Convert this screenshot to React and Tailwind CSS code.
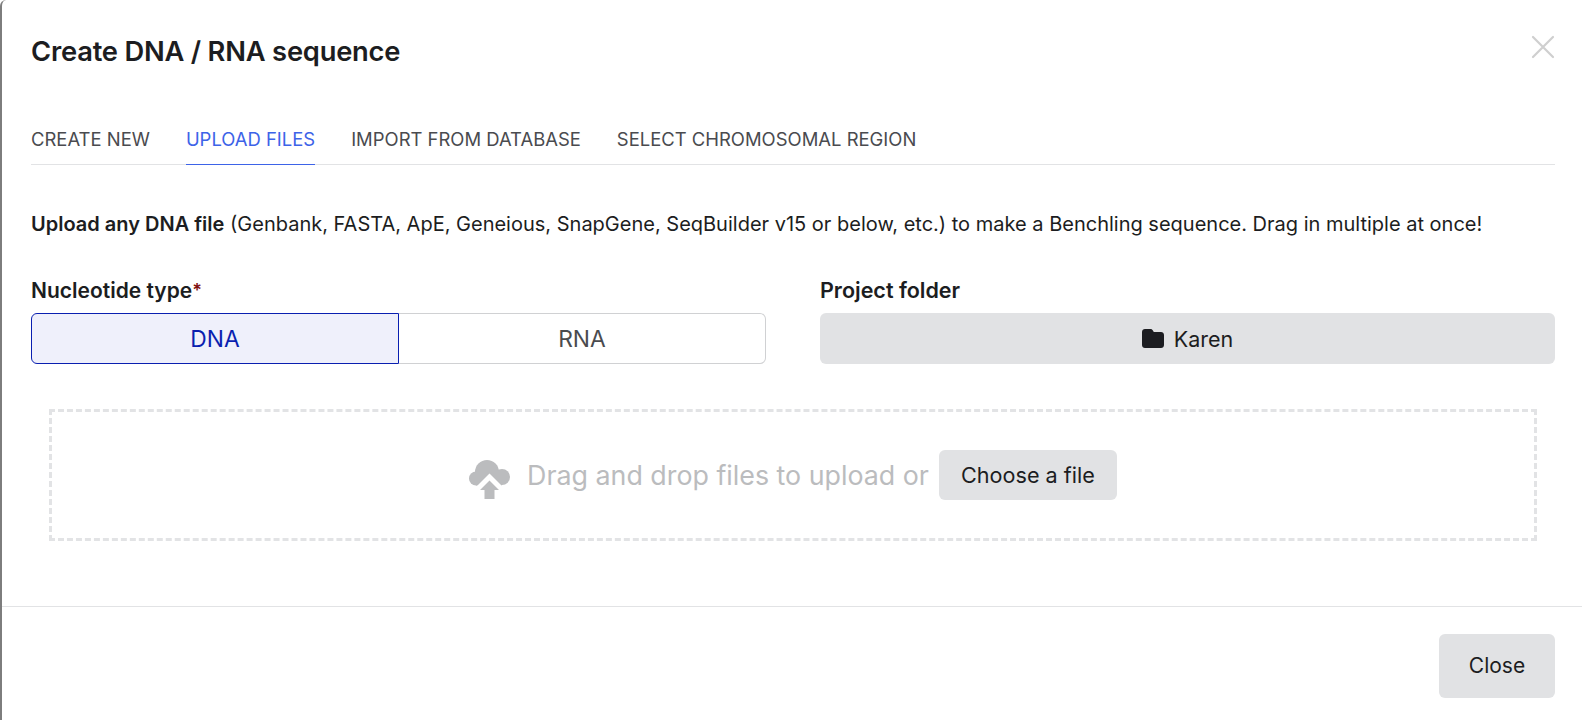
const Folder = () => (
  <svg width="22" height="19" viewBox="0 0 22 19" className="shrink-0" aria-hidden="true">
    <path d="M3 0h5.500c1 0 1.700.4 2.200 1.200L11.800 3H19c1.700 0 3 1.300 3 3v10c0 1.700-1.300 3-3 3H3c-1.700 0-3-1.300-3-3V3c0-1.700 1.300-3 3-3z" fill="#1c1d21" />
  </svg>
);
const Cloud = () => (
  <svg width="41" height="39" viewBox="0 0 41 39" className="shrink-0 mt-[8px]" aria-hidden="true">
    <g fill="#bbbcbe">
      <circle cx="18" cy="12" r="12" />
      <circle cx="33" cy="17" r="8" />
      <circle cx="7" cy="18.500" r="7" />
      <rect x="7" y="12" width="26" height="13.500" />
    </g>
    <path d="M20.500 13.500L6 28h29z" fill="#ffffff" />
    <path d="M20.500 20.500L30 30h-4.500v9h-10v-9H11z" fill="#bbbcbe" />
  </svg>
);
export default function App() {
  return (
    <div className="relative h-[720px] w-[1582px] overflow-hidden bg-white font-['Inter',sans-serif] text-[#1c1d21]">
      <div className="h-full border-l-2 border-[#7d7d7d] rounded-tl-md flex flex-col">
        <div className="flex-1 pl-[29px] pr-[27px] flex flex-col">
          <div className="flex items-center justify-between h-[104px]">
            <h1 className="text-[27.300px] font-semibold tracking-[-0.2px] leading-none">Create DNA / RNA sequence</h1>
            <button className="text-[#cfcfcf] -mt-[10px]" aria-label="Close dialog">
              <svg width="24" height="24" viewBox="0 0 24 24" fill="none" stroke="currentColor" strokeWidth="2.200" strokeLinecap="round"><path d="M2 2l20 20M22 2L2 22" /></svg>
            </button>
          </div>
          <div className="flex gap-9 h-[61px] border-b border-[#e2e3e5] text-[18.450px] text-[#4a4b4f] items-stretch">
            <div className="flex items-center pt-[12px]">CREATE NEW</div>
            <div className="flex items-center pt-[12px] text-[#3d63e8] border-b border-[#3d63e8] -mb-px">UPLOAD FILES</div>
            <div className="flex items-center pt-[12px]">IMPORT FROM DATABASE</div>
            <div className="flex items-center pt-[12px]">SELECT CHROMOSOMAL REGION</div>
          </div>
          <p className="mt-[47px] text-[20px] leading-[24px] whitespace-nowrap"><span className="font-semibold">Upload any DNA file</span> (Genbank, FASTA, ApE, Geneious, SnapGene, SeqBuilder v15 or below, etc.) to make a Benchling sequence. Drag in multiple at once!</p>
          <div className="mt-[43px] grid grid-cols-[735px_735px] gap-x-[54px]">
            <div>
              <div className="text-[21px] font-semibold leading-[24px] h-[34px]">Nucleotide type<span className="text-[#7f1010] text-[18px] align-top">*</span></div>
              <div className="flex h-[51px] text-[22.800px]">
                <div className="w-[368px] flex items-center justify-center pt-[2px] rounded-l-md border border-[#0a1fb0] bg-[#eff0fb] text-[#0a1fb0]">DNA</div>
                <div className="flex-1 flex items-center justify-center pt-[2px] rounded-r-md border border-l-0 border-[#d0d1d3] text-[#4a4b4f]">RNA</div>
              </div>
            </div>
            <div>
              <div className="text-[21.500px] font-semibold leading-[23px] h-[34px]">Project folder</div>
              <div className="flex h-[51px] items-center justify-center gap-[10px] rounded-md bg-[#e1e2e4] text-[21.500px]"><Folder /><span className="pt-[2px]">Karen</span></div>
            </div>
          </div>
          <div className="mt-[45px] mx-[18px] h-[132px] border-[3px] border-dashed border-[#e2e3e5] flex items-center justify-center">
            <Cloud />
            <span className="ml-[17px] text-[26.800px] text-[#bbbcbe]">Drag and drop files to upload or</span>
            <button className="ml-[10px] h-[50px] w-[178px] rounded-md bg-[#e1e2e4] text-[21.600px] text-[#1c1d21]">Choose a file</button>
          </div>
        </div>
        <div className="h-[114px] border-t border-[#e2e3e5] pr-[27px] flex justify-end items-start pt-[27px]">
          <button className="h-[64px] w-[116px] rounded-md bg-[#e1e2e4] text-[21px]">Close</button>
        </div>
      </div>
    </div>
  );
}
